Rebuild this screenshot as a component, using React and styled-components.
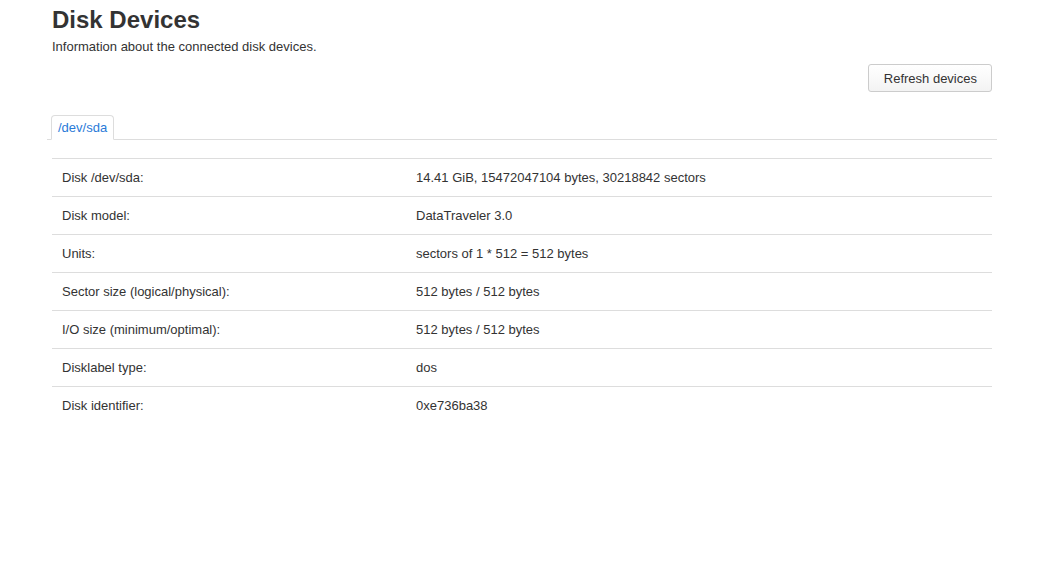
import styled, { createGlobalStyle } from 'styled-components';

const GlobalStyle = createGlobalStyle`
    html, body {
        margin: 0;
        padding: 0;
        background: #fff;
    }
    body {
        font-family: "Liberation Sans", Arial, sans-serif;
        font-size: 13px;
        color: #333;
    }
`;

const Page = styled.div`
    width: 940px;
    padding: 7px 0 0 52px;
`;

const Title = styled.h2`
    margin: 0;
    font-size: 24px;
    line-height: 26px;
    font-weight: bold;
    color: #333;
`;

const Description = styled.div`
    margin-top: 5px;
    line-height: 18px;
`;

const Actions = styled.div`
    display: flex;
    justify-content: flex-end;
    margin-top: 8px;
`;

const Button = styled.button`
    height: 28px;
    padding: 0 14px 0 15px;
    font-family: inherit;
    font-size: 13px;
    color: #333;
    border: 1px solid #ccc;
    border-radius: 3px;
    background: linear-gradient(#fff, #f3f3f3);
    cursor: pointer;
`;

const Tabs = styled.ul`
    display: flex;
    list-style: none;
    margin: 23px -5px 0;
    padding: 0 0 0 4px;
    border-bottom: 1px solid #ddd;
`;

const Tab = styled.li`
    margin-bottom: -1px;
    padding: 0 6px;
    height: 23px;
    line-height: 24px;
    border: 1px solid #ddd;
    border-bottom-color: ${p => (p.$active ? '#fff' : '#ddd')};
    border-radius: 4px 4px 0 0;
    background: #fff;
    color: #2a7ad8;
`;

const Table = styled.div`
    margin-top: 18px;
    border-top: 1px solid #ddd;
`;

const Row = styled.div`
    display: grid;
    grid-template-columns: 354px 1fr;
    height: 37px;
    align-items: center;
    border-bottom: ${p => (p.$last ? 'none' : '1px solid #ddd')};
`;

const Cell = styled.div`
    padding-left: 10px;
`;

const rows = [
    ['Disk /dev/sda:', '14.41 GiB, 15472047104 bytes, 30218842 sectors'],
    ['Disk model:', 'DataTraveler 3.0'],
    ['Units:', 'sectors of 1 * 512 = 512 bytes'],
    ['Sector size (logical/physical):', '512 bytes / 512 bytes'],
    ['I/O size (minimum/optimal):', '512 bytes / 512 bytes'],
    ['Disklabel type:', 'dos'],
    ['Disk identifier:', '0xe736ba38'],
];

export default function App() {
    return (
        <>
            <GlobalStyle />
            <Page>
                <Title>Disk Devices</Title>
                <Description>Information about the connected disk devices.</Description>
                <Actions>
                    <Button>Refresh devices</Button>
                </Actions>
                <Tabs>
                    <Tab $active>/dev/sda</Tab>
                </Tabs>
                <Table>
                    {rows.map(([label, value], i) => (
                        <Row key={label} $last={i === rows.length - 1}>
                            <Cell>{label}</Cell>
                            <Cell>{value}</Cell>
                        </Row>
                    ))}
                </Table>
            </Page>
        </>
    );
}
